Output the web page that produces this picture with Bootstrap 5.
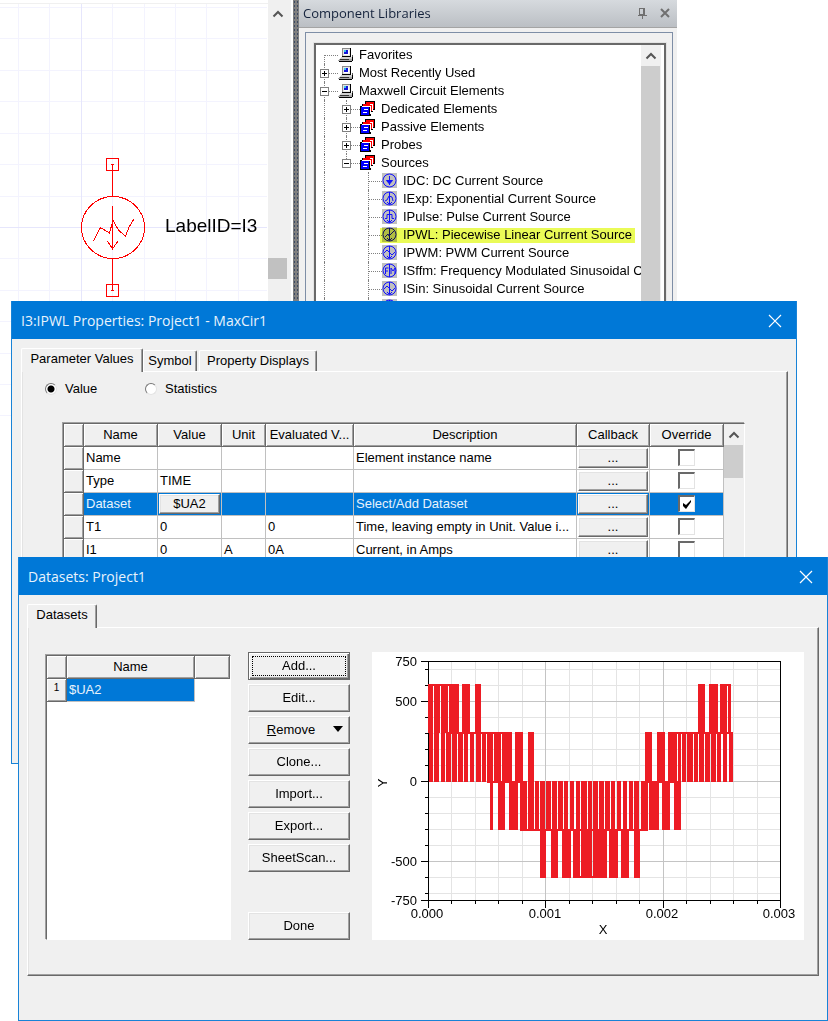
<!DOCTYPE html>
<html lang="en">
<head>
<meta charset="utf-8">
<meta name="viewport" content="width=device-width, initial-scale=1">
<title>Datasets: Project1</title>
<link href="https://cdn.jsdelivr.net/npm/bootstrap@5.3.0/dist/css/bootstrap.min.css" rel="stylesheet">
<style>
:root{--face:#f0f0f0;--blue:#0078d7;--dark:#696969;--mid:#a0a0a0;--soft:#e3e3e3}
body{font-family:"Liberation Sans",Arial,sans-serif;font-size:13px;line-height:18px;color:#000;background:#fff}
button{font:inherit;color:inherit}
.desk{min-height:100vh;overflow:hidden}

/* schematic editor */
.schematic{width:268px;padding-top:3px}
.vbar{background:var(--face)}
.vbar svg{display:block}
.thumb{background:#c1c1c1}
.splitter{width:6px;background:#7f7f7f radial-gradient(circle,#3c4a63 1px,transparent 1px) 0 0/3px 4px}

/* component library */
.library{width:378px;background:var(--face)}
.library-title{height:28px;padding:0 6px 2px 4px;background:linear-gradient(#d6dade,#bbbfc4);border-bottom:1px solid #a4a4a4;font:13px/26px "Open Sans",sans-serif;color:#15233c}
.bare{border:0;background:none;padding:0;line-height:0}
.frame{margin:4px 4px 0 6px;border:1px solid #7e8ea6;border-bottom:0;padding:10px 6px 0 8px}
.tree-box{border:solid;border-width:2px 2px 0 2px;border-color:var(--dark);padding-right:3px;background:#fff;outline:1px solid var(--soft)}
.tree{min-width:0;padding-top:1px;overflow:hidden}
.node{height:18px;white-space:nowrap}
.guide{position:relative;flex:0 0 22px;height:18px}
.guide::before{content:"";position:absolute;left:8px;top:0;bottom:0;border-left:1px dotted #808080}
.guide::after{content:"";position:absolute;left:8px;right:0;top:9px;border-top:1px dotted #808080}
.guide.empty::before,.guide.empty::after,.guide.pass::after{display:none}
.guide.first::before{top:9px}
.guide.last::before{bottom:9px}
.expander{position:absolute;z-index:1;left:4px;top:5px;width:9px;height:9px;padding:0;border:1px solid #808080;background:linear-gradient(#000,#000) 1px 3px/5px 1px no-repeat,#fff}
.expander.closed{background:linear-gradient(#000,#000) 1px 3px/5px 1px no-repeat,linear-gradient(#000,#000) 3px 1px/1px 5px no-repeat,#fff}
.node svg{flex:0 0 16px;margin-right:5px}
.marked::after{content:"";position:absolute;left:-2px;right:-3px;top:2px;bottom:1px;background:#eafb57;mix-blend-mode:multiply}

/* dialogs */
.window{background:var(--face);border:1px solid #1883d7;border-top:0}
.props{left:11px;right:31px;top:301px;height:463px}
.datasets{left:18px;right:0;top:557px}
.caption{height:38px;padding:1px 14px 0 9px;background:var(--blue);color:#e8f3fc;font:14px/36px "Open Sans",sans-serif}
.tabs{height:24px;padding-left:9px}
.datasets .tabs{padding-left:8px}
.tab{border:1px solid #fff;border-right-color:var(--dark);border-bottom:0;box-shadow:inset -1px 0 var(--mid);background:var(--face);height:21px;padding:0;line-height:20px;border-radius:2px 2px 0 0;margin-right:2px}
.tab.active{height:24px;line-height:20px;position:relative;z-index:1;margin-bottom:-1px;padding-bottom:3px}
.w-param{width:122px}.w-symbol{width:54px}.w-display{width:118px}.w-data{width:70px}
.sheet{border:1px solid;border-color:#fff var(--dark) var(--dark) #fff;box-shadow:inset -1px -1px var(--mid),inset 1px 0 var(--soft)}
.props .sheet{margin:0 8px 0 9px;height:392px;padding:8px 42px 0 41px}
.datasets .sheet{margin:0 8px 44px;padding:24px 14px 35px 18px}
.radio{appearance:none;width:12px;height:12px;margin:0;border:1px solid;border-color:#777 #e3e3e3 #e3e3e3 #777;border-radius:50%;background:#fff}
.radio:checked{background:radial-gradient(circle,#000 3px,#fff 4px)}
.options{margin:0 0 25px -18px}
.option{width:100px}
.sunken{border:1px solid;border-color:var(--dark) #fff #fff var(--dark);box-shadow:-1px -1px var(--mid)}
.grid{table-layout:fixed;border-collapse:separate;border-spacing:0;width:100%}
.grid th,.grid td{height:23px;padding:0 2px;line-height:22px;overflow:hidden;white-space:nowrap;font-weight:400;border:solid #c0c0c0;border-width:0 1px 1px 0;vertical-align:top}
.grid th{background:var(--face);border-color:var(--dark);box-shadow:inset 1px 1px #fff,inset -1px -1px var(--mid);text-align:center}
.grid .picked td{background:var(--blue);color:#e8f3fc}
.grid .tight{padding:1px 1px}
.grid .rownum{font-size:10px;line-height:18px}
.bevel{border:1px solid;border-color:#fff var(--dark) var(--dark) #fff;background:var(--face);box-shadow:inset -1px -1px var(--mid),inset 1px 1px var(--soft)}
.cellbtn{display:block;width:100%;height:20px;padding:0;line-height:18px;color:#000}
.tick{appearance:none;display:block;width:17px;height:17px;margin:1px auto 0;border:solid;border-width:2px 1px 1px 2px;border-color:var(--dark) var(--soft) var(--soft) var(--dark);background:#fff}
.tick:checked{background:#fff url("data:image/svg+xml,%3Csvg xmlns='http://www.w3.org/2000/svg' viewBox='0 0 14 14'%3E%3Cpath d='M3 6v3l3 3 5-7V3L6 8z'/%3E%3C/svg%3E") center/14px}
.list{width:185px;margin-top:3px;background:#fff}
.actions{width:102px;margin:0 22px 0 17px}
.push{height:28px;padding:0;line-height:24px;text-align:center}
.push.default{border-color:var(--dark);box-shadow:inset 1px 1px #fff,inset -1px -1px var(--dark),inset -2px -2px var(--mid);padding:3px}
.push.default span{display:block;height:20px;line-height:18px;border:1px dotted #000}
.push.split{padding-right:16px}
.caret{right:6px;top:9px}
.plot{min-width:0;background:#fff}
.plot svg{display:block;width:100%;height:auto}
</style>
</head>
<body>
<main class="desk position-relative">
  <div class="d-flex align-items-start">
    <section class="schematic" aria-label="Schematic">
      <svg class="d-block" width="268" height="420" viewBox="0 3 268 420" shape-rendering="crispEdges" fill="none">
        <path d="M0 3.5H268" stroke="#f0f0f0"/>
        <path stroke="#f3f3fe" d="M18.5 4V420M49.5 4V420M112.5 4V420M144.5 4V420M175.5 4V420M206.5 4V420M238.5 4V420M0 7.500H267M0 38.500H267M0 70.500H267M0 101.500H267M0 133.500H267M0 164.500H267M0 196.500H267M0 258.500H267M0 290.500H267M0 321.500H267M0 353.500H267M0 384.500H267M0 415.500H267"/>
        <path stroke="#e6e6fc" d="M81.500 4V420M0 227.500H267"/>
        <g stroke="#f00">
          <path d="M106.500 158.500h12v12h-12zM106.500 284.500h12v12h-12zM112.500 164V196M112.500 258V291M112.500 206V248M111 164.500h3M111 290.500h3"/>
          <ellipse cx="113" cy="227.500" rx="31.500" ry="31"/>
          <path d="M93.500 241 100.500 227.500 109.500 233 113 220.500 118.500 230 125.500 236.500 129 227 134 219M107.500 241 112.500 249 118 241"/>
        </g>
        <text x="165" y="232" font-size="19" fill="#000">LabelID=I3</text>
      </svg>
    </section>
    <div class="vbar" style="width:23px">
      <svg width="20" height="258" viewBox="0 0 20 258"><path d="M5.500 16.500 10 12l4.500 4.500" fill="none" stroke="#555" stroke-width="2"/></svg>
      <div class="thumb" style="width:19px;height:21px"></div>
      <div style="height:31px"></div>
    </div>
    <div style="width:2px"></div>
    <div class="splitter align-self-start" style="height:310px"></div>

    <aside class="library">
      <div class="library-title d-flex align-items-center">
        <span class="flex-grow-1">Component Libraries</span>
        <button class="bare me-2" aria-label="Pin"><svg width="16" height="14" viewBox="0 0 16 14" fill="none" stroke="#707070" shape-rendering="crispEdges"><path d="M4.500 2.500h5v6h-5zM3 9.500h9M7.500 10v3M8.500 2v7"/></svg></button>
        <button class="bare" aria-label="Close"><svg width="12" height="12" viewBox="0 0 12 12" fill="none" stroke="#707070" stroke-width="2"><path d="M2 2l8 8M10 2l-8 8"/></svg></button>
      </div>
      <div class="frame">
        <div class="tree-box d-flex">
          <div class="tree flex-grow-1" id="tree"></div>
          <div class="vbar d-flex flex-column" style="width:20px">
            <svg width="20" height="21" viewBox="0 0 20 21"><path d="M5.500 13.500 10 9l4.500 4.500" fill="none" stroke="#555" stroke-width="2"/></svg>
            <div class="flex-grow-1" style="width:19px;background:#cdcdcd"></div>
          </div>
        </div>
      </div>
    </aside>
  </div>

  <section class="window props position-absolute" aria-label="Properties">
    <header class="caption d-flex align-items-center justify-content-between">
      <span>I3:IPWL Properties: Project1 - MaxCir1</span>
      <button class="bare" aria-label="Close"><svg width="14" height="14" viewBox="0 0 14 14" fill="none" stroke="#fff" stroke-width="1.200"><path d="M1 1l12 12M13 1 1 13"/></svg></button>
    </header>
    <nav class="tabs d-flex align-items-end mt-2">
      <button class="tab active w-param me-0">Parameter Values</button>
      <button class="tab w-symbol">Symbol</button>
      <button class="tab w-display">Property Displays</button>
    </nav>
    <div class="sheet">
      <div class="options d-flex">
        <label class="option d-flex align-items-center"><input class="radio me-2" type="radio" name="mode" checked>Value</label>
        <label class="option d-flex align-items-center"><input class="radio me-2" type="radio" name="mode">Statistics</label>
      </div>
      <div class="sunken d-flex bg-white">
        <table class="grid flex-grow-1">
          <colgroup><col style="width:20px"><col style="width:74px"><col style="width:64px"><col style="width:44px"><col style="width:88px"><col><col style="width:73px"><col style="width:74px"></colgroup>
          <thead><tr><th></th><th>Name</th><th>Value</th><th>Unit</th><th>Evaluated V...</th><th>Description</th><th>Callback</th><th>Override</th></tr></thead>
          <tbody id="params"></tbody>
        </table>
        <div class="vbar" style="width:20px">
          <svg width="20" height="21" viewBox="0 0 20 21"><path d="M5.500 13.500 10 9l4.500 4.500" fill="none" stroke="#555" stroke-width="2"/></svg>
          <div style="width:19px;height:33px;background:#cdcdcd"></div>
        </div>
      </div>
    </div>
  </section>

  <section class="window datasets position-absolute" aria-label="Datasets">
    <header class="caption d-flex align-items-center justify-content-between">
      <span>Datasets: Project1</span>
      <button class="bare" aria-label="Close"><svg width="14" height="14" viewBox="0 0 14 14" fill="none" stroke="#fff" stroke-width="1.200"><path d="M1 1l12 12M13 1 1 13"/></svg></button>
    </header>
    <nav class="tabs d-flex align-items-end mt-2"><button class="tab active w-data">Datasets</button></nav>
    <div class="sheet d-flex">
      <div class="list sunken">
        <table class="grid">
          <colgroup><col style="width:20px"><col style="width:128px"><col></colgroup>
          <thead><tr><th></th><th>Name</th><th></th></tr></thead>
          <tbody><tr class="picked"><th class="rownum">1</th><td>$UA2</td><td class="border-0 bg-white"></td></tr></tbody>
        </table>
      </div>
      <div class="actions d-flex flex-column gap-1">
        <button class="bevel push default"><span>Add...</span></button>
        <button class="bevel push">Edit...</button>
        <button class="bevel push split position-relative"><u>R</u>emove<svg class="caret position-absolute" width="10" height="6" viewBox="0 0 10 6"><path d="M0 0h10L5 6z"/></svg></button>
        <button class="bevel push">Clone...</button>
        <button class="bevel push">Import...</button>
        <button class="bevel push">Export...</button>
        <button class="bevel push">SheetScan...</button>
        <button class="bevel push mt-auto">Done</button>
      </div>
      <div class="plot flex-grow-1">
        <svg viewBox="0 0 432 288" role="img" aria-label="Y against X">
          <g id="lines" shape-rendering="crispEdges" fill="none"></g>
          <g id="wave" fill="#ed1c24" shape-rendering="crispEdges" transform="translate(-12 -12) scale(.3333333)"></g>
          <g font-size="13" text-anchor="end">
            <text x="45" y="14">750</text><text x="45" y="54">500</text><text x="45" y="134">0</text><text x="45" y="214">-500</text><text x="45" y="253">-750</text>
          </g>
          <g font-size="13" text-anchor="middle">
            <text x="55" y="266">0.000</text><text x="173" y="266">0.001</text><text x="290" y="266">0.002</text><text x="407" y="266">0.003</text>
            <text x="231" y="282">X</text><text transform="translate(15 131) rotate(-90)">Y</text>
          </g>
        </svg>
      </div>
    </div>
  </section>
</main>

<script>
// Icons of the component tree
const pc = '<svg width="16" height="16" viewBox="0 0 16 16" shape-rendering="crispEdges"><path d="M4 1h8v8H4z" fill="#e4e4e4"/><path d="M4 1h1v8H4zM5 1h7v1H5z" fill="#8a8a8a"/><path d="M6 3h5v5H6z" fill="#fff"/><path d="M6 3h4v4H6z" fill="#1414d8"/><path d="M6 3h2v2H6z" fill="#39c5ee"/><path d="M12 1h1v9h-1zM4 9h8v1H4zM14 10h1v4h-1v1H1v-1h13z"/><path d="M3 10h11v2H2v-1h1z" fill="#d0d0d0"/><path d="M1 12h13v2H0v-1h1z" fill="#a8a8a8"/><path d="M2 12h9v1H2z" fill="#333"/><path d="M14 8h1v2h-1z" fill="#555"/></svg>';
const book = '<svg width="16" height="16" viewBox="0 0 16 16" shape-rendering="crispEdges"><path d="M5 0h10v9h-2v2h-2v4H0V5h2V3h3z"/><path d="M6 1h8v2H6zM12 3h2v5h-2z" fill="#f00"/><path d="M5 3h8v1H5zM12 3h1v7h-1z" fill="#fff"/><path d="M3 3h7v1H3zM3 4h8v1H3zM10 4h2v6h-2z" fill="#f00"/><path d="M2 5h9v1H2zM10 5h1v8h-1z" fill="#fff"/><path d="M1 6h8v8H1z" fill="#00f"/><path d="M4 8h4v1H4zM3 11h4v1H3z" fill="#fff"/></svg>';
const src = d => `<svg width="16" height="16" viewBox="0 0 16 16"><path d="M0 0h15v15H0z" fill="#c0c0c0"/><g fill="none" stroke="#11f"><circle cx="7.5" cy="7.500" r="6.500"/>${d}</g></svg>`;
const arrow = '<path d="M7.500 1v12M5 11l2.500 2.500L10 11"/>';
const nodes = [
  ['first', pc, 'Favorites'], ['closed', pc, 'Most Recently Used'], ['open', pc, 'Maxwell Circuit Elements'],
  ['pass closed', book, 'Dedicated Elements'], ['pass closed', book, 'Passive Elements'], ['pass closed', book, 'Probes'], ['pass open last', book, 'Sources'],
  ['leaf', src('<path d="M7.500 3v9"/><path d="M4.500 7.500h6L7.500 11z" fill="#11f"/>'), 'IDC: DC Current Source'],
  ['leaf', src(arrow + '<path d="M3 10l2-1 2-4 3 1 1 4"/>'), 'IExp: Exponential Current Source'],
  ['leaf', src(arrow + '<path d="M3 9.500h2v-4h5v4h2"/>'), 'IPulse: Pulse Current Source'],
  ['leaf marked-row', src(arrow + '<path d="M3 10l3-3 1 2 5-5"/>'), 'IPWL: Piecewise Linear Current Source'],
  ['leaf', src(arrow + '<path d="M2 8l3-3 5 5 3-3"/>'), 'IPWM: PWM Current Source'],
  ['leaf', src('<path d="M3.500 11V5h3M3.500 8h2.500M9 11V5l2 3 2-3v6M7.500 1v13"/>'), 'ISffm: Frequency Modulated Sinusoidal C'],
  ['leaf', src(arrow + '<path d="M2 8l3-3 5 5 3-3"/>'), 'ISin: Sinusoidal Current Source'],
  ['leaf', src(arrow), '']
];
document.getElementById('tree').innerHTML = nodes.map(([kind, icon, name]) => {
  const box = /open|closed/.test(kind) ? `<button class="expander ${/closed/.test(kind) ? 'closed' : ''}" aria-label="Toggle ${name}"></button>` : '';
  const own = `<span class="guide ${/first|last/.exec(kind) || ''}">${box}</span>`;
  const pass = '<span class="guide pass"></span>';
  const before = /leaf/.test(kind) ? pass + '<span class="guide empty"></span>' : /pass/.test(kind) ? pass : '';
  const mark = /marked/.test(kind) ? 'marked position-relative' : '';
  return `<div class="node d-flex">${before}${own}<span class="d-flex align-items-center ${mark}">${icon}${name}</span></div>`;
}).join('');

// Rows of the parameter table
const rows = [
  ['Name', '', '', '', 'Element instance name'], ['Type', 'TIME', '', '', ''],
  ['Dataset', '$UA2', '', '', 'Select/Add Dataset'], ['T1', '0', '', '0', 'Time, leaving empty in Unit. Value i...'],
  ['I1', '0', 'A', '0A', 'Current, in Amps']
];
document.getElementById('params').innerHTML = rows.map(r => {
  const on = r[0] === 'Dataset';
  const cells = r.map((t, i) => on && i === 1 ? `<td class="tight"><button class="bevel cellbtn">${t}</button></td>` : `<td>${t}</td>`).join('');
  return `<tr class="${on ? 'picked' : ''}"><th></th>${cells}<td class="tight"><button class="bevel cellbtn" aria-label="Callback for ${r[0]}">...</button></td><td class="tight"><input class="tick" type="checkbox" aria-label="Override ${r[0]}"${on ? ' checked' : ''}></td></tr>`;
}).join('');

// Chart grid, axes and ticks
let minor = '', major = '', axis = 'M56.500 9.500H408.500V248.500H56.500Z';
for (let i = 0; i <= 15; i++) {
  const x = Math.round(56 + i * 23.47) + .5;
  if (i % 5) minor += `M${x} 10V248`; else major += `M${x} 10V248`;
  axis += `M${x} 248v${i % 5 ? 4 : 8}`;
}
for (let y = 17; y < 248; y += 16) {
  if ((y - 49) % 80) minor += `M57 ${y}.500H408`; else major += `M57 ${y}.500H408`;
  axis += `M${(y - 49) % 80 ? 53 : 49} ${y}.500H56`;
}
axis += 'M49 9.500H56M49 248.500H56';
document.getElementById('lines').innerHTML = `<path d="${minor}" stroke="#e4e4e4"/><path d="${major}" stroke="#c4c4c4"/><path d="${axis}" stroke="#000"/>`;

// Pulse train: [top, bottom, x-start and x-end pairs]
const bands = [
  [131, 280, [205,219,222,240,243,264,267,297,307,330,345,363,1014,1035,1047,1074,1080,1101,1104,1113]],
  [131, 138, [205,297,1080,1110]],
  [276, 426, [207,218,222,237,243,255,258,273,276,291,294,309,312,324,330,342,347,363,366,378,381,399,402,423,426,456,466,489,504,522,855,876,891,915,924,951,954,963,966,978,981,998,1002,1014,1017,1032,1035,1050,1053,1068,1071,1083,1089,1101,1107,1119]],
  [275, 282, [258,456,924,1110]],
  [423, 570, [389,399,414,435,447,474,480,501,504,522,525,537,540,555,558,573,576,591,594,609,612,624,630,642,648,660,663,681,684,696,699,714,717,732,735,750,753,765,771,783,789,801,807,819,822,837,843,864,867,897,906,930,942,963]],
  [422, 428, [381,501,843,963]],
  [566, 573, [480,864]],
  [568, 714, [540,558,573,594,606,633,639,660,663,683,684,696,699,741,747,774,783,807,822,840]],
  [708, 715, [639,741]]
];
document.getElementById('wave').innerHTML = bands.map(([t, b, xs]) =>
  xs.map((x, i) => i % 2 ? '' : `<rect x="${x}" y="${t}" width="${xs[i + 1] - x}" height="${b - t}"/>`).join('')).join('');
</script>
<script src="https://cdn.jsdelivr.net/npm/bootstrap@5.3.0/dist/js/bootstrap.bundle.min.js"></script>
</body>
</html>
